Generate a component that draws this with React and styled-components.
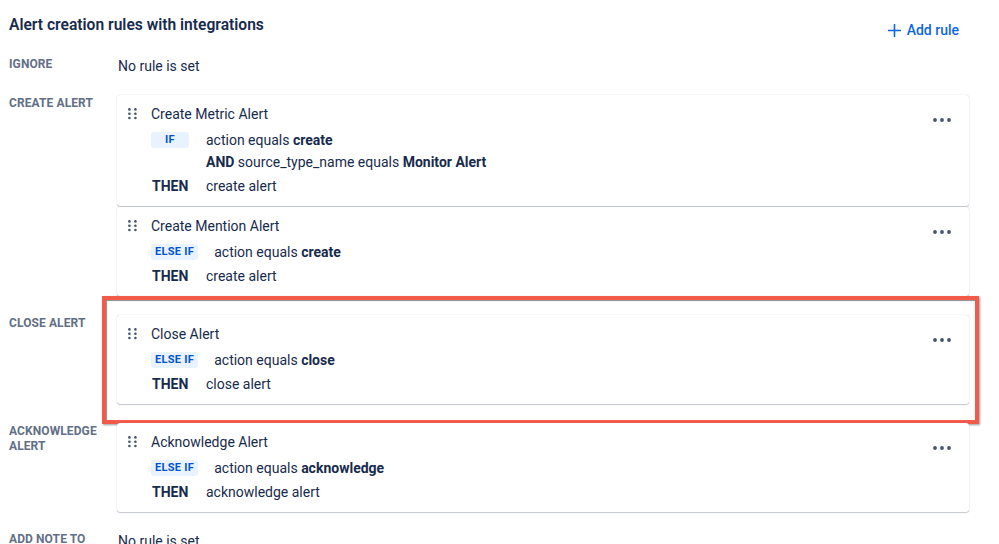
import React from 'react'
import styled, { createGlobalStyle } from 'styled-components'

const Global = createGlobalStyle`
  html, body {
    margin: 0;
    padding: 0;
    background: #fff;
    overflow: hidden;
  }
  body {
    font-family: Roboto, "Liberation Sans", Arial, sans-serif;
    color: #172B4D;
  }
`

const Page = styled.div`
  padding: 14px 30px 0 9px;
`

const Header = styled.div`
  display: flex;
  justify-content: space-between;
  align-items: flex-start;
  margin-bottom: 10px;
`

const Title = styled.h2`
  margin: 0;
  font-size: 15.6px;
  line-height: 22px;
  font-weight: 600;
  color: #172B4D;
`

const AddButton = styled.button`
  display: flex;
  align-items: center;
  gap: 6px;
  height: 32px;
  padding: 0 10px 0 8px;
  border: none;
  background: none;
  color: #0C66E4;
  font-family: inherit;
  font-size: 14px;
  font-weight: 500;
  cursor: pointer;
`

const Sections = styled.div`
  display: flex;
  flex-direction: column;
  gap: 19px;
`

const Section = styled.div`
  display: grid;
  grid-template-columns: 108px 1fr;
  align-items: start;
`

const Label = styled.div`
  font-size: 12px;
  font-weight: 700;
  line-height: 15px;
  color: #626F86;
  text-transform: uppercase;
  letter-spacing: 0.1px;
  padding-top: ${p => (p.$plain ? '1px' : '1px')};
  max-width: 96px;
`

const Empty = styled.div`
  font-size: 14px;
  line-height: 20px;
  padding-left: 1px;
`

const Cards = styled.div`
  display: flex;
  flex-direction: column;
  gap: 1px;
`

const Card = styled.div`
  position: relative;
  display: grid;
  grid-template-columns: 23px 1fr 32px;
  padding: 9px 11px 9px 11px;
  border-radius: 3px;
  background: #fff;
  box-shadow: 0 1px 1px rgba(9, 30, 66, 0.22), 0 0 1px rgba(9, 30, 66, 0.28);
`

const Highlight = styled.div`
  position: absolute;
  top: -19px;
  left: -15px;
  right: -10px;
  bottom: -20px;
  border: 4px solid #F25A4A;
  box-shadow: inset 1px 1px 1px rgba(0, 0, 0, 0.45), 1px 1px 2px rgba(0, 0, 0, 0.4);
  pointer-events: none;
`

const Handle = styled.div`
  height: 20px;
  display: flex;
  align-items: center;
`

const Body = styled.div`
  display: flex;
  flex-direction: column;
`

const RuleName = styled.div`
  font-size: 14px;
  line-height: 20px;
  margin-bottom: 5px;
`

const Block = styled.div`
  display: flex;
  margin-top: ${p => (p.$first ? '0' : '2px')};
`

const Keyword = styled.div`
  flex: none;
  min-width: 38px;
  margin-right: 16px;
  display: flex;
  align-items: center;
  height: 22px;
  font-size: 14px;
  font-weight: 700;
  padding-left: 1px;
`

const Badge = styled.span`
  display: inline-block;
  min-width: 38px;
  box-sizing: border-box;
  padding: 0 4px;
  height: 16px;
  line-height: 16px;
  text-align: center;
  border-radius: 3px;
  background: #E9F2FF;
  color: #0055CC;
  font-size: 11px;
  font-weight: 700;
  letter-spacing: 0.3px;
  margin-left: -1px;
`

const Lines = styled.div`
  display: flex;
  flex-direction: column;
`

const Line = styled.div`
  font-size: 14px;
  line-height: 22px;
  white-space: nowrap;

  b {
    font-weight: 700;
  }
`

const Menu = styled.button`
  width: 32px;
  height: 32px;
  display: flex;
  align-items: center;
  justify-content: center;
  border: none;
  background: none;
  padding: 0;
  cursor: pointer;
`

const DragIcon = () => (
  <svg width="9" height="12" viewBox="0 0 9 12">
    {[1.4, 5.7, 10].map(y => (
      <g key={y} fill="#44546F">
        <circle cx="1.4" cy={y} r="1.3" />
        <circle cx="7.4" cy={y} r="1.3" />
      </g>
    ))}
  </svg>
)

const DotsIcon = () => (
  <svg width="18" height="4" viewBox="0 0 18 4">
    <g fill="#44546F">
      <circle cx="2" cy="2" r="1.9" />
      <circle cx="9" cy="2" r="1.9" />
      <circle cx="16" cy="2" r="1.9" />
    </g>
  </svg>
)

const PlusIcon = () => (
  <svg width="13" height="13" viewBox="0 0 13 13">
    <path d="M6.5 0.5v12M0.5 6.5h12" stroke="#0C66E4" strokeWidth="1.6" strokeLinecap="round" />
  </svg>
)

function RuleCard({ name, cond, value, extra, then, highlighted }) {
  return (
    <Card>
      <Handle><DragIcon /></Handle>
      <Body>
        <RuleName>{name}</RuleName>
        <Block $first>
          <Keyword><Badge>{cond}</Badge></Keyword>
          <Lines>
            <Line>action equals <b>{value}</b></Line>
            {extra && (
              <Line><b>AND</b> source_type_name equals <b>{extra}</b></Line>
            )}
          </Lines>
        </Block>
        <Block>
          <Keyword>THEN</Keyword>
          <Lines>
            <Line>{then}</Line>
          </Lines>
        </Block>
      </Body>
      <Menu><DotsIcon /></Menu>
      {highlighted && <Highlight />}
    </Card>
  )
}

export default function App() {
  return (
    <Page>
      <Global />
      <Header>
        <Title>Alert creation rules with integrations</Title>
        <AddButton><PlusIcon />Add rule</AddButton>
      </Header>
      <Sections>
        <Section>
          <Label $plain>Ignore</Label>
          <Empty>No rule is set</Empty>
        </Section>
        <Section>
          <Label>Create alert</Label>
          <Cards>
            <RuleCard name="Create Metric Alert" cond="IF" value="create" extra="Monitor Alert" then="create alert" />
            <RuleCard name="Create Mention Alert" cond="ELSE IF" value="create" then="create alert" />
          </Cards>
        </Section>
        <Section>
          <Label>Close alert</Label>
          <Cards>
            <RuleCard name="Close Alert" cond="ELSE IF" value="close" then="close alert" highlighted />
          </Cards>
        </Section>
        <Section>
          <Label>Acknowledge alert</Label>
          <Cards>
            <RuleCard name="Acknowledge Alert" cond="ELSE IF" value="acknowledge" then="acknowledge alert" />
          </Cards>
        </Section>
        <Section>
          <Label $plain>Add note to</Label>
          <Empty>No rule is set</Empty>
        </Section>
      </Sections>
    </Page>
  )
}
